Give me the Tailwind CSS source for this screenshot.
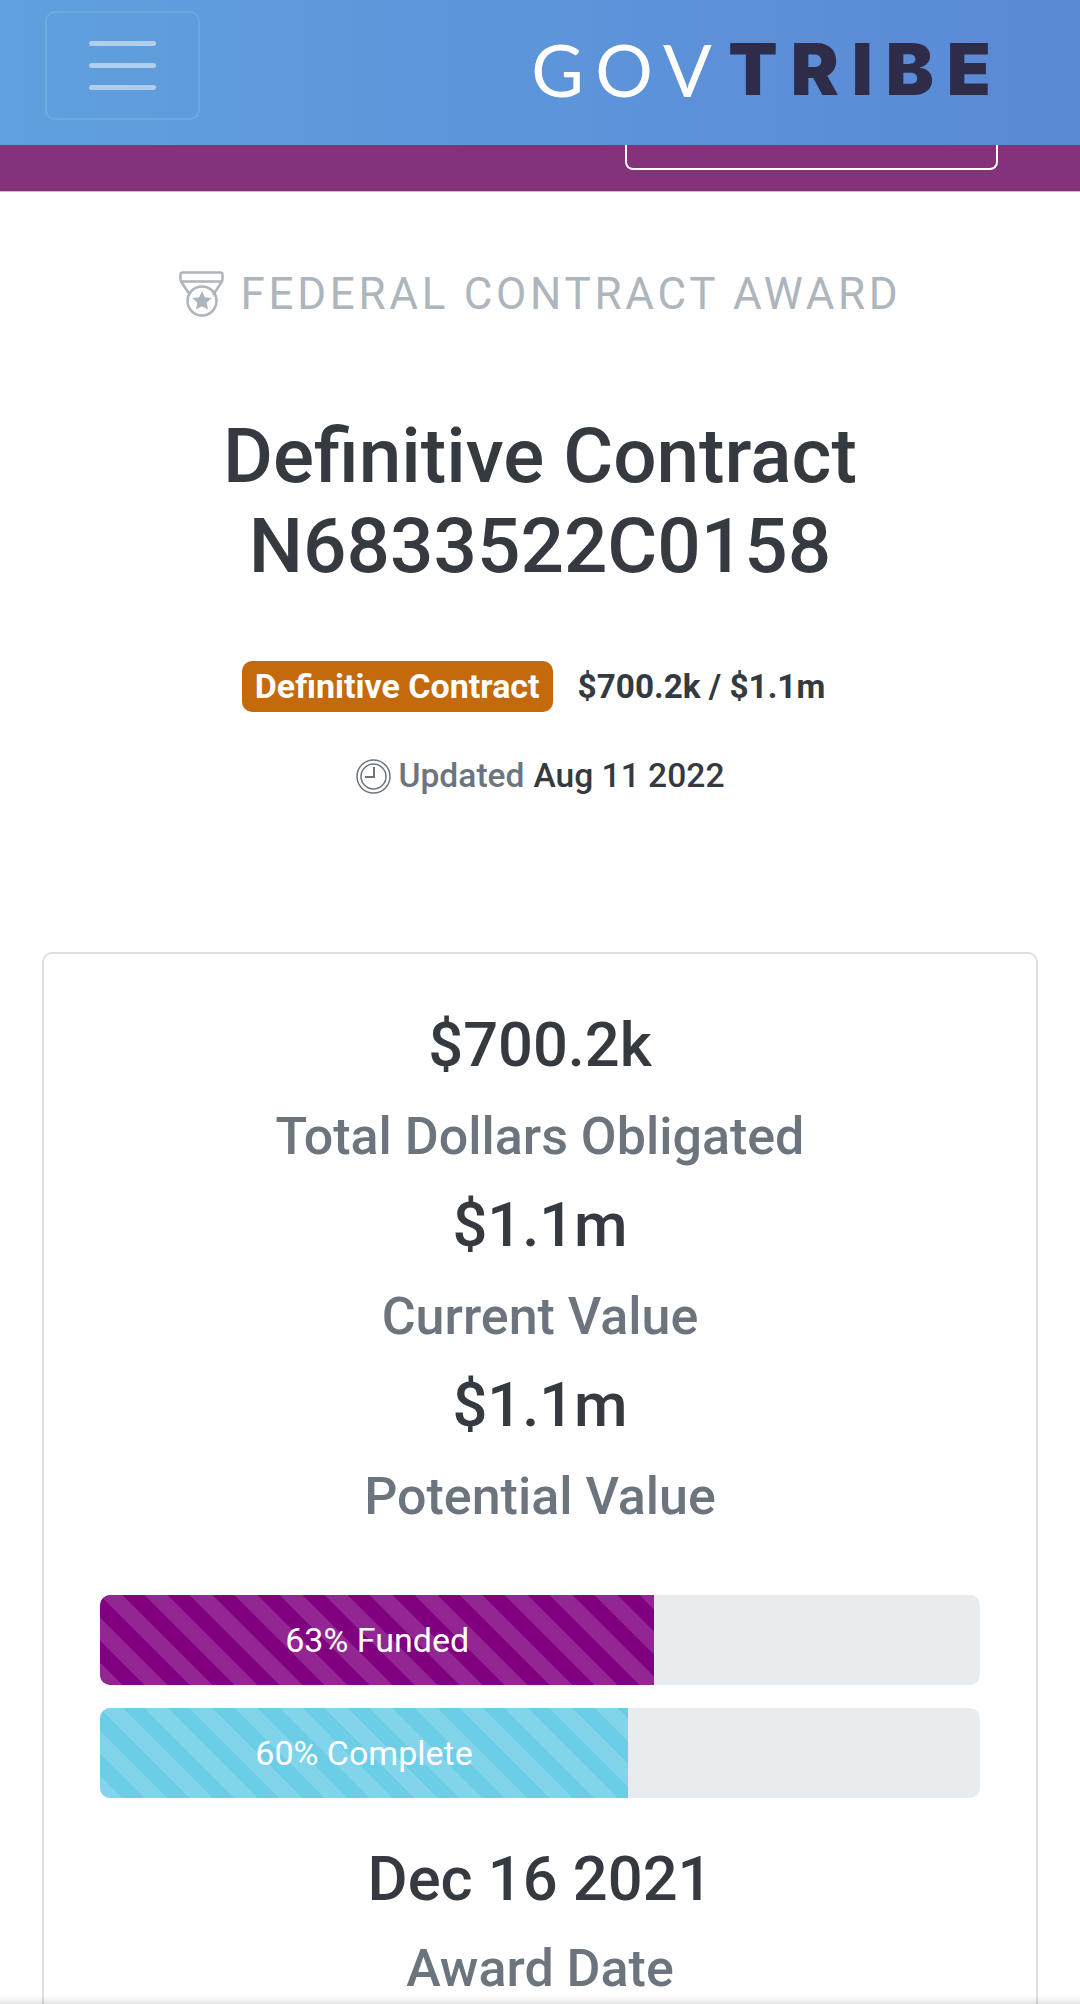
<!DOCTYPE html>
<html lang="en">
<head>
  <meta charset="UTF-8" />
  <meta name="viewport" content="width=device-width, initial-scale=1.0"/>
  <title>Definitive Contract N6833522C0158 - GovTribe</title>
  <script src="https://cdn.jsdelivr.net/npm/@tailwindcss/browser@4"></script>
</head>
<body class="bg-white h-[2004px] overflow-hidden relative font-['Roboto',sans-serif] text-[#343a40]">

  <!-- top nav -->
  <header class="h-[145px] bg-gradient-to-r from-[#60a0de] to-[#5a89d6] flex items-start justify-between pl-[45px] pr-[76px] pt-[11px]">
    <button class="w-[155px] h-[109px] rounded-[10px] border-2 border-white/10 flex flex-col items-center justify-center gap-[17px]">
      <span class="block w-[67px] h-[5px] rounded-full bg-white/50"></span>
      <span class="block w-[67px] h-[5px] rounded-full bg-white/50"></span>
      <span class="block w-[67px] h-[5px] rounded-full bg-white/50"></span>
    </button>
    <div class="flex items-center h-[115px] text-[72px] leading-none">
      <span class="font-['Lato',sans-serif] font-normal text-white tracking-[11.5px]">GOV</span>
      <span class="font-['Inter',sans-serif] font-black text-[#2e2c48] tracking-[13px] ml-[5px]">TRIBE</span>
    </div>
  </header>

  <!-- purple sub nav -->
  <div class="h-[47px] bg-[#84327a] border-b border-[#d9b8d4] flex justify-end pr-[82px]">
    <div class="w-[373px] h-[25px] border-2 border-t-0 border-white rounded-b-[8px]"></div>
  </div>

  <main class="flex flex-col items-center">
    <div class="flex items-center gap-[17px] mt-[79px] h-[46px]">
      <svg class="w-[45px] h-[46px]" viewBox="0 0 45 46" fill="none" stroke="#adb5bd" stroke-width="2.5">
        <rect x="1.5" y="1.5" width="42" height="9" rx="2"/>
        <path d="M2 10.5 11 24M43 10.5 34 24"/>
        <circle cx="23" cy="30" r="14.5"/>
        <path fill="#adb5bd" stroke="none" d="M23 20l2.9 6.3 6.8.8-5 4.7 1.3 6.8-6-3.4-6 3.4 1.3-6.8-5-4.7 6.8-.8z"/>
      </svg>
      <span class="text-[44px] leading-none font-normal tracking-[3.7px] text-[#adb5bd]">FEDERAL CONTRACT AWARD</span>
    </div>

    <h1 class="mt-[94px] text-center text-[76.5px] leading-[90px] font-medium">Definitive Contract<br>N6833522C0158</h1>

    <div class="mt-[70px] flex items-center gap-[25px] h-[51px] pr-[13px]">
      <span class="h-[51px] px-[13px] flex items-center rounded-[10px] bg-[#c4690c] text-white text-[34px] font-bold">Definitive Contract</span>
      <span class="text-[33.3px] font-bold">$700.2k / $1.1m</span>
    </div>

    <div class="mt-[46px] flex items-center h-[36px] text-[33.6px] font-medium">
      <svg class="w-[35px] h-[35px] mr-[8px]" viewBox="0 0 35 35" fill="none" stroke="#6c757d">
        <circle cx="17.5" cy="17.5" r="16.5" stroke-width="1.5"/>
        <circle cx="17.5" cy="17.5" r="12.5" stroke-width="1.5"/>
        <path stroke-width="2" d="M18 8v10H9"/>
      </svg>
      <span class="text-[#6c757d]">Updated</span>
      <span class="ml-[9px]">Aug 11 2022</span>
    </div>

    <!-- summary card -->
    <section class="mt-[158px] w-[996px] border-2 border-[#dfdfdf] rounded-[10px] px-[56px] pt-[46px] text-center">
      <div class="text-[61.4px] leading-[90px] font-medium">$700.2k</div>
      <div class="pt-[4px] text-[52px] leading-[86px] font-medium text-[#6c757d]">Total Dollars Obligated</div>
      <div class="text-[61.4px] leading-[90px] font-medium">$1.1m</div>
      <div class="pt-[4px] text-[52px] leading-[86px] font-medium text-[#6c757d]">Current Value</div>
      <div class="text-[61.4px] leading-[90px] font-medium">$1.1m</div>
      <div class="pt-[4px] text-[52px] leading-[86px] font-medium text-[#6c757d]">Potential Value</div>

      <div class="mt-[55px] h-[90px] rounded-[10px] bg-[#e9ecef] overflow-hidden flex">
        <div class="w-[63%] flex items-center justify-center text-white text-[34px] bg-[#800080] bg-[length:45px_45px] bg-[linear-gradient(45deg,rgba(255,255,255,.15)_25%,transparent_25%,transparent_50%,rgba(255,255,255,.15)_50%,rgba(255,255,255,.15)_75%,transparent_75%,transparent)]">63% Funded</div>
      </div>
      <div class="mt-[23px] h-[90px] rounded-[10px] bg-[#e9ecef] overflow-hidden flex">
        <div class="w-[60%] flex items-center justify-center text-white text-[34px] bg-[#6ccde6] bg-[length:45px_45px] bg-[linear-gradient(45deg,rgba(255,255,255,.15)_25%,transparent_25%,transparent_50%,rgba(255,255,255,.15)_50%,rgba(255,255,255,.15)_75%,transparent_75%,transparent)]">60% Complete</div>
      </div>

      <div class="mt-[36px] text-[61.4px] leading-[90px] font-medium">Dec 16 2021</div>
      <div class="text-[52px] leading-[90px] font-medium text-[#6c757d]">Award Date</div>
    </section>
  </main>

  <!-- browser edge shadow -->
  <div class="absolute left-0 right-0 bottom-0 h-[8px] bg-gradient-to-b from-transparent to-black/10"></div>
</body>
</html>
